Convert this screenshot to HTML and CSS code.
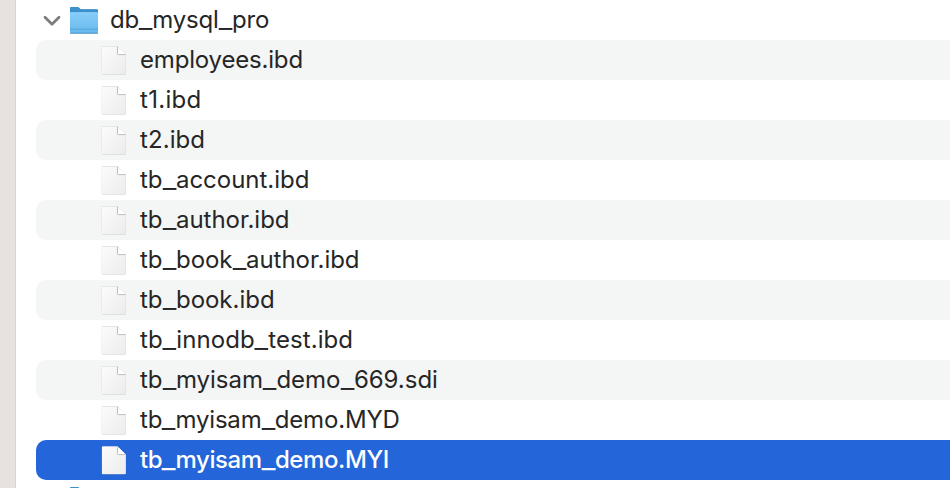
FILE: index.html
```
<!DOCTYPE html>
<html lang="en">
<head>
<meta charset="utf-8">
<title>db_mysql_pro</title>
<link rel="stylesheet" href="styles.css">
</head>
<body>
<svg class="defs" aria-hidden="true">
  <defs>
    <linearGradient id="paper" x1="0" y1="0" x2="1" y2="1"><stop offset="0" stop-color="#fcfcfc"/><stop offset="1" stop-color="#ececec"/></linearGradient>
    <linearGradient id="front" x1="0" y1="0" x2="0" y2="1"><stop offset="0" stop-color="#86cdfa"/><stop offset="1" stop-color="#68b8ec"/></linearGradient>
    <symbol id="file" viewBox="0 0 28 32">
      <path d="M2.6 2.3h14.9l8.4 8.2v19.1a.7.7 0 0 1-.7.7H2.6a.7.7 0 0 1-.7-.7V3a.7.7 0 0 1 .7-.7z" fill="url(#paper)"/>
      <path d="M17.5 2.5v7.3q0 .8.9.8h7.3z" fill="#fff"/>
      <path d="M17.5 2.8v7q0 .8.9.8h7" fill="none" stroke="#bdbdbd" stroke-width="1"/>
    </symbol>
    <symbol id="folder" viewBox="0 0 32 32">
      <path d="M2 4.2A1.2 1.2 0 0 1 3.2 3h6.3q.8 0 1.3.6l1.2 1.2q.4.4 1.2.4h15.6A1.2 1.2 0 0 1 30 6.4V12H2z" fill="#3b91cc"/>
      <path d="M2 9.4q0-.9.9-.9h26.2q.9 0 .9.9v19a1 1 0 0 1-1 1H3a1 1 0 0 1-1-1z" fill="url(#front)"/>
      <path d="M2.4 8.8h27.2" stroke="#9cd9fc" stroke-width=".8"/>
      <path d="M2 25.2h28" stroke="#4da2dc" stroke-width=".9"/>
      <path d="M2.4 29h27.2" stroke="#4a9dd8" stroke-width=".9"/>
    </symbol>
  </defs>
</svg>
<div class="window">
  <aside class="edge"></aside>
  <main class="list">
    <div class="row folder-row">
      <svg class="chevron" viewBox="0 0 18 12"><path d="M2 2.2l7 7 7-7"/></svg>
      <svg class="folder"><use href="#folder"/></svg>
      <span class="snug">db<i>_</i>mysql<i>_</i>pro</span>
    </div>
    <div class="row shaded"><svg class="file"><use href="#file"/></svg><span class="snug">employees.ibd</span></div>
    <div class="row"><svg class="file"><use href="#file"/></svg><span class="loose">t1.ibd</span></div>
    <div class="row shaded"><svg class="file"><use href="#file"/></svg><span class="open">t2.ibd</span></div>
    <div class="row"><svg class="file"><use href="#file"/></svg><span>tb<i>_</i>account.ibd</span></div>
    <div class="row shaded"><svg class="file"><use href="#file"/></svg><span>tb<i>_</i>author.ibd</span></div>
    <div class="row"><svg class="file"><use href="#file"/></svg><span>tb<i>_</i>book<i>_</i>author.ibd</span></div>
    <div class="row shaded"><svg class="file"><use href="#file"/></svg><span>tb<i>_</i>book.ibd</span></div>
    <div class="row"><svg class="file"><use href="#file"/></svg><span class="open">tb<i>_</i>innodb<i>_</i>test.ibd</span></div>
    <div class="row shaded"><svg class="file"><use href="#file"/></svg><span>tb<i>_</i>myisam<i>_</i>demo<i>_</i>669.sdi</span></div>
    <div class="row"><svg class="file"><use href="#file"/></svg><span class="snug">tb<i>_</i>myisam<i>_</i>demo.MYD</span></div>
    <div class="row selected"><svg class="file"><use href="#file"/></svg><span class="tight">tb<i>_</i>myisam<i>_</i>demo.MYI</span></div>
    <div class="row folder-row next"><svg class="folder"><use href="#folder"/></svg></div>
  </main>
</div>
</body>
</html>
```
FILE: styles.css
```
* { box-sizing: border-box; }
body { margin: 0; background: #fff; overflow: hidden; }
.defs { position: absolute; width: 0; height: 0; }
.window { display: flex; width: 100%; height: 488px; overflow: hidden; }
.edge { flex: none; width: 16px; background: #e7e1e0; border-right: 1px solid #d9d3d2; }
.list { flex: 1; min-width: 0; padding-left: 20px; }
.row {
  display: flex;
  align-items: center;
  height: 40px;
  padding-left: 64px;
  border-radius: 10px 0 0 10px;
  font: 400 24px/40px Inter, "Liberation Sans", sans-serif;
  letter-spacing: -0.02px;
  color: #262626;
  white-space: nowrap;
}
.row i { display: inline-block; margin: 0 1.25px; font-style: normal; transform: scaleX(1.25); }
.snug { letter-spacing: -0.18px; }
.open { letter-spacing: 0.08px; }
.loose { letter-spacing: 0.3px; }
.tight { letter-spacing: -0.4px; }
.shaded { background: #f4f5f5; }
.selected { background: #2465d9; color: #fff; font-weight: 500; }
.file { flex: none; width: 28px; height: 32px; margin-right: 12px; filter: drop-shadow(0 .5px .7px rgba(0, 0, 0, .45)); }
.folder-row { padding-left: 7px; }
.chevron { flex: none; width: 18px; height: 12px; margin: 1px 7px 0 0; fill: none; stroke: #7d7d7d; stroke-width: 2.8; stroke-linecap: round; stroke-linejoin: round; }
.folder { flex: none; width: 32px; height: 32px; margin-right: 10px; filter: drop-shadow(0 .5px .7px rgba(0, 0, 0, .4)); }
.next { padding-left: 32px; }
```
